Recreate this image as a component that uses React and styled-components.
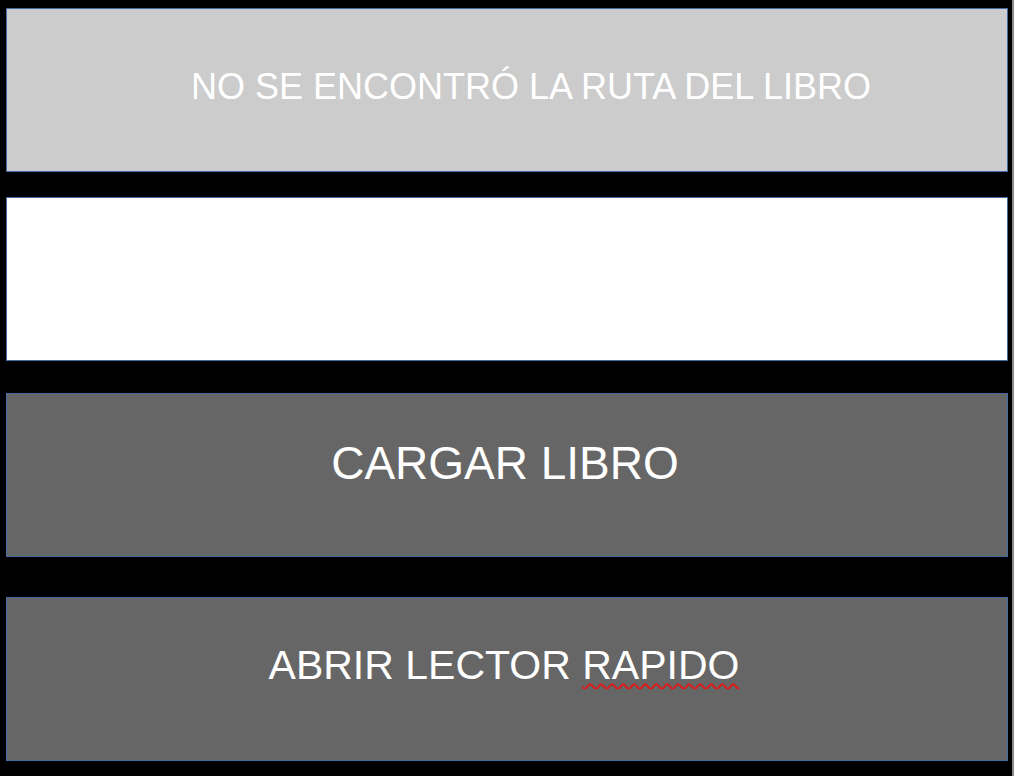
import React from "react";
import styled, { createGlobalStyle } from "styled-components";

const GlobalStyle = createGlobalStyle`
  html, body {
    margin: 0;
    padding: 0;
    background: #000000;
    font-family: "Liberation Sans", Arial, sans-serif;
  }
`;

const Screen = styled.div`
  width: 1014px;
  height: 776px;
  box-sizing: border-box;
  background: #000000;
  border-right: 2px solid #8a8a8a;
  padding: 8px 4px 0 6px;
  display: flex;
  flex-direction: column;
`;

const Panel = styled.div`
  box-sizing: border-box;
  height: ${(p) => p.$height || 164}px;
  margin-top: ${(p) => p.$gap || 0}px;
  background: ${(p) => p.$bg};
  border: 1px solid #4469a3;
  display: flex;
  align-items: center;
  justify-content: center;
  padding: ${(p) => p.$pad || "0"};
  color: #ffffff;
`;

const Label = styled.span`
  font-size: ${(p) => p.$size}px;
  line-height: 1;
  white-space: nowrap;
`;

const Misspelled = styled.span`
  text-decoration: underline wavy #e01818;
  text-decoration-thickness: 1.5px;
  text-underline-offset: 4px;
`;

export default function App() {
  return (
    <>
      <GlobalStyle />
      <Screen>
        <Panel $bg="#cccccc" $pad="0 0 6px 48px">
          <Label $size={36}>NO SE ENCONTRÓ LA RUTA DEL LIBRO</Label>
        </Panel>
        <Panel $bg="#ffffff" $gap={25} />
        <Panel $bg="#666666" $gap={32} $pad="0 4px 24px 0">
          <Label $size={46}>CARGAR LIBRO</Label>
        </Panel>
        <Panel $bg="#666666" $gap={40} $pad="0 6px 28px 0">
          <Label $size={41}>
            ABRIR LECTOR <Misspelled>RAPIDO</Misspelled>
          </Label>
        </Panel>
      </Screen>
    </>
  );
}
